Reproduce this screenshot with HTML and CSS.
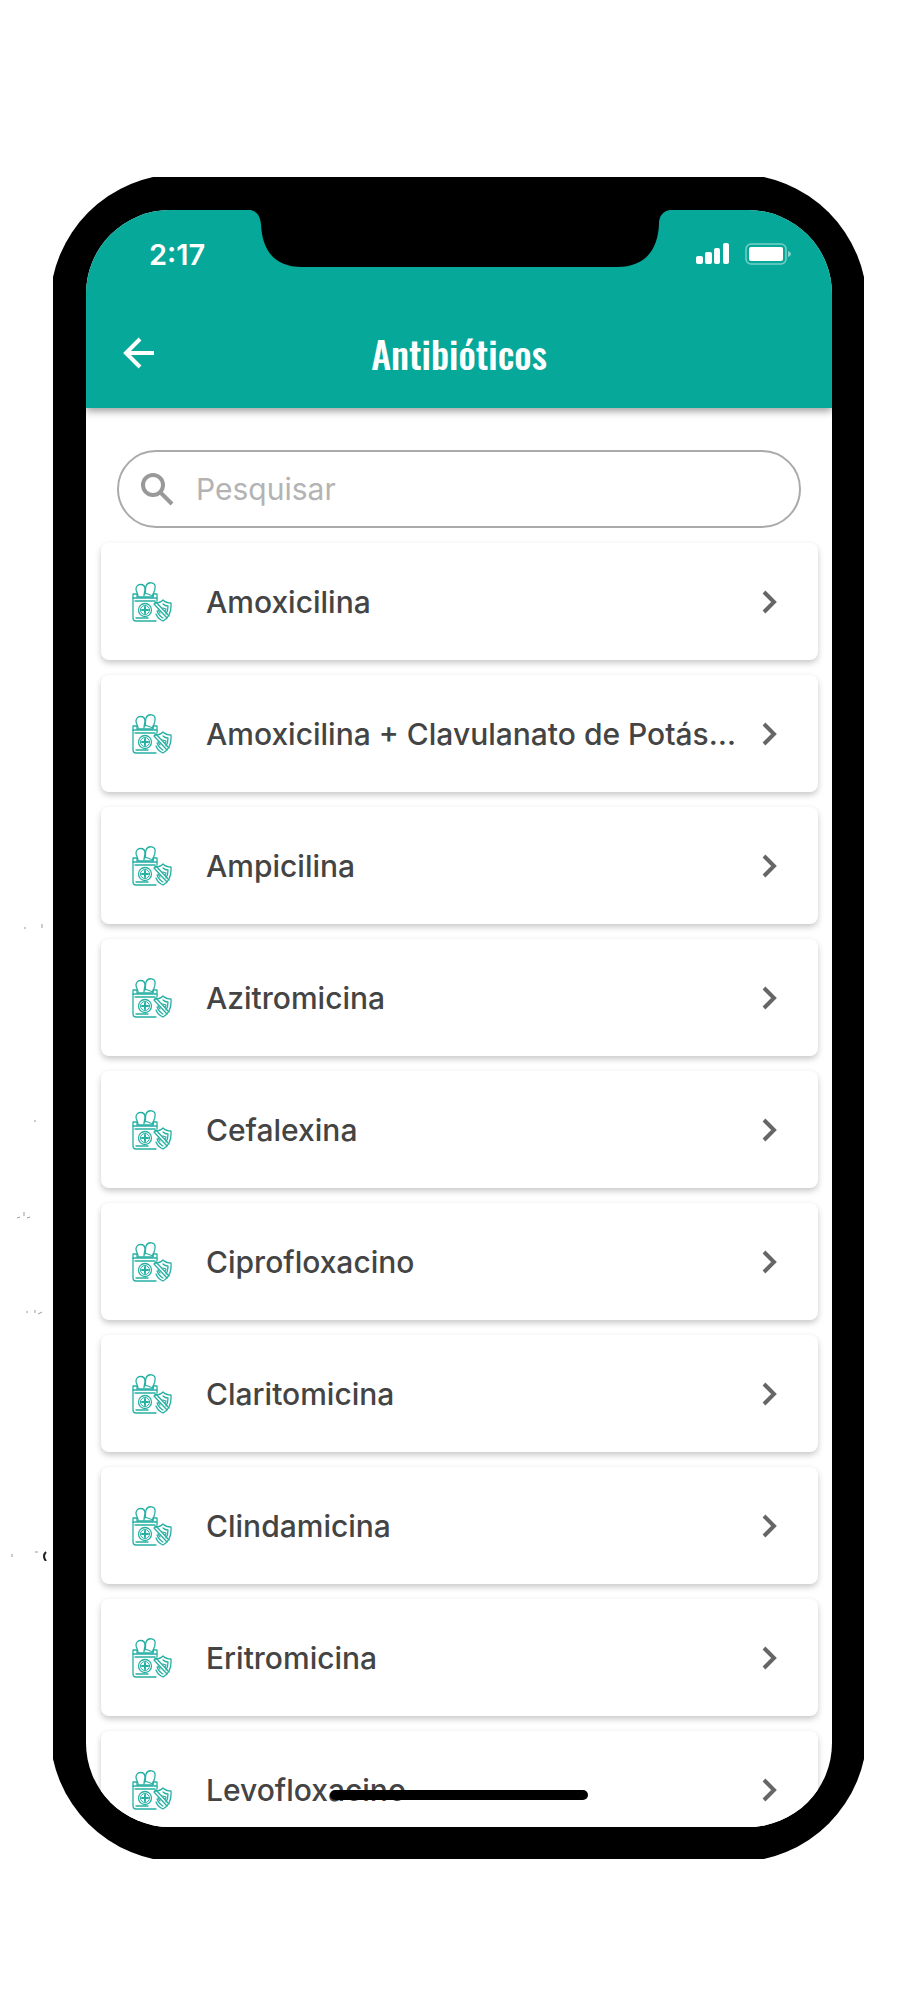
FILE: index.html
```
<!DOCTYPE html>
<html lang="pt-BR">
<head>
  <meta charset="utf-8">
  <meta name="viewport" content="width=device-width, initial-scale=1">
  <title>Antibióticos</title>
  <link rel="stylesheet" href="styles.css">
</head>
<body>
  <svg class="icon-defs" aria-hidden="true">
    <symbol id="icon-medicine" viewBox="0 0 40 40">
      <g fill="none" stroke="currentColor" stroke-width="1.3" stroke-linejoin="round" stroke-linecap="round">
        <!-- pills -->
        <path d="M6 14 C6 11 4 10 4 7 C4 1 13 1 13 7 C13 10 12 11 12 14"/>
        <path d="M13 12 C14 9 13 7 14 4 C16 -1 24 0 23 6 C23 9 21 11 21 14"/>
        <path d="M13 11 L21 14"/>
        <!-- bag -->
        <path d="M1 12 H5 V15 H21 V12 H25 V19 M1 12 V36 Q1 39 4 39 H24"/>
        <path d="M1 16 H25 M3 19 H23 M4 36 H16"/>
        <circle cx="13" cy="28" r="6.500"/>
        <circle cx="13" cy="28" r="4.500" stroke-width="1"/>
        <path d="M13 25 V31 M10 28 H16" stroke-width="2"/>
        <!-- shield -->
        <path d="M31 18 Q34 21 39 21 Q40 34 31 39 Q26 37 24 32 M23 21 Q28 21 31 18"/>
        <path d="M31 22 Q33 24 36 24 Q36 29 34 32 M25 29 Q27 34 31 36"/>
        <path d="M22 22 L35 36 M24 20 L37 34 M22 22 L24 20"/>
        <path d="M31 26 L34 27 L33 29 M26 28 L28 31"/>
      </g>
    </symbol>
    <symbol id="icon-chevron" viewBox="0 0 16 24">
      <path d="M2 2 L12 12 L2 22" fill="none" stroke="currentColor" stroke-width="4"/>
    </symbol>
  </svg>

  <svg class="specks" viewBox="0 0 50 650" aria-hidden="true">
    <path d="M25 16v2M42 13v4M35 209v2M24 301v4M17 307l3-1M27 307l3-1M27 400v2M35 399v3M38 403l4-2M12 643v3M35 641h3" stroke="#999" stroke-width="1"/>
    <path d="M46 641q-4 4 0 9" fill="none" stroke="#222" stroke-width="2"/>
  </svg>

  <div class="phone">
    <div class="frame">
      <main class="screen">
        <header class="app-bar">
          <div class="status-bar">
            <span class="time">2:17</span>
            <div class="status-icons">
              <svg width="34" height="22" viewBox="0 0 34 22" fill="#fff" aria-hidden="true">
                <rect x="0" y="13" width="7" height="8" rx="2"/>
                <rect x="9" y="9" width="7" height="12" rx="2"/>
                <rect x="18" y="5" width="6" height="16" rx="2"/>
                <rect x="27" y="0" width="6" height="21" rx="2"/>
              </svg>
              <svg width="47" height="22" viewBox="0 0 47 22" aria-hidden="true">
                <rect x="1" y="1" width="40" height="20" rx="5" fill="none" stroke="#fff" stroke-opacity=".45" stroke-width="1.500"/>
                <rect x="4" y="4" width="34" height="14" rx="2" fill="#fff"/>
                <path d="M43 8 Q46 9 46 11 Q46 13 43 14 Z" fill="#fff" fill-opacity=".5"/>
              </svg>
            </div>
          </div>
          <div class="toolbar">
            <button class="back" type="button" aria-label="Voltar">
              <svg width="32" height="32" viewBox="0 0 32 32" aria-hidden="true">
                <path d="M17 2 L3 16 L17 30 M3 16 H31" fill="none" stroke="#fff" stroke-width="4"/>
              </svg>
            </button>
            <h1>Antibióticos</h1>
          </div>
        </header>

        <div class="search">
          <label for="search" aria-label="Pesquisar">
            <svg width="34" height="34" viewBox="0 0 34 34" fill="none" stroke="currentColor" stroke-width="4" aria-hidden="true">
              <circle cx="13" cy="13" r="10"/>
              <path d="M20 20 L32 32"/>
            </svg>
          </label>
          <input type="text" id="search" placeholder="Pesquisar">
        </div>

        <nav class="list">
          <a class="card" href="#"><svg class="medicine"><use href="#icon-medicine"/></svg><span>Amoxicilina</span><svg class="chevron"><use href="#icon-chevron"/></svg></a>
          <a class="card" href="#"><svg class="medicine"><use href="#icon-medicine"/></svg><span>Amoxicilina + Clavulanato de Potássio</span><svg class="chevron"><use href="#icon-chevron"/></svg></a>
          <a class="card" href="#"><svg class="medicine"><use href="#icon-medicine"/></svg><span>Ampicilina</span><svg class="chevron"><use href="#icon-chevron"/></svg></a>
          <a class="card" href="#"><svg class="medicine"><use href="#icon-medicine"/></svg><span>Azitromicina</span><svg class="chevron"><use href="#icon-chevron"/></svg></a>
          <a class="card" href="#"><svg class="medicine"><use href="#icon-medicine"/></svg><span>Cefalexina</span><svg class="chevron"><use href="#icon-chevron"/></svg></a>
          <a class="card" href="#"><svg class="medicine"><use href="#icon-medicine"/></svg><span>Ciprofloxacino</span><svg class="chevron"><use href="#icon-chevron"/></svg></a>
          <a class="card" href="#"><svg class="medicine"><use href="#icon-medicine"/></svg><span>Claritomicina</span><svg class="chevron"><use href="#icon-chevron"/></svg></a>
          <a class="card" href="#"><svg class="medicine"><use href="#icon-medicine"/></svg><span>Clindamicina</span><svg class="chevron"><use href="#icon-chevron"/></svg></a>
          <a class="card" href="#"><svg class="medicine"><use href="#icon-medicine"/></svg><span>Eritromicina</span><svg class="chevron"><use href="#icon-chevron"/></svg></a>
          <a class="card" href="#"><svg class="medicine"><use href="#icon-medicine"/></svg><span>Levofloxacino</span><svg class="chevron"><use href="#icon-chevron"/></svg></a>
        </nav>

        <svg class="notch" viewBox="0 0 420 58" aria-hidden="true">
          <path d="M0 0 C7 1 10 6 11 14 C12 40 24 57 52 57 H367 C395 57 408 40 409 14 C409 6 413 1 420 0 Z" fill="#000"/>
        </svg>
        <div class="home-indicator"></div>
      </main>
    </div>
  </div>
</body>
</html>
```

FILE: styles.css
```
* {
  box-sizing: border-box;
}

body {
  margin: 0;
  padding: 177px 60px 0 53px;
  background: #fff;
  font-family: Inter, "Liberation Sans", sans-serif;
  color: #444;
}

.icon-defs {
  position: absolute;
  width: 0;
  height: 0;
}

.specks {
  position: absolute;
  left: 0;
  top: 911px;
  width: 50px;
  height: 650px;
}

/* the outer shell trims the frame corners */
.phone {
  display: flow-root;
  height: calc(100vh - 318px);
  overflow: hidden;
}

.frame {
  height: calc(100% + 6px);
  margin: -3px;
  padding: 36px 35px 35px 36px;
  background: #000;
  border-radius: 131px;
}

.screen {
  position: relative;
  display: flex;
  flex-direction: column;
  height: 100%;
  overflow: hidden;
  background: #fff;
  border-radius: 84px;
}

.app-bar {
  flex: none;
  background: #06a899;
  box-shadow: 0 3px 8px rgba(0, 0, 0, 0.4);
}

.status-bar {
  display: flex;
  justify-content: space-between;
  align-items: center;
  height: 88px;
  padding: 0 40px 0 63px;
}

.time {
  color: #fff;
  font-size: 29px;
  font-weight: 600;
}

.status-icons {
  display: flex;
  gap: 15px;
}

.toolbar {
  display: grid;
  grid-template-columns: 32px 1fr 32px;
  align-items: center;
  height: 110px;
  padding: 0 37px;
}

.back {
  display: flex;
  padding: 0;
  border: 0;
  background: none;
  cursor: pointer;
}

h1 {
  margin: 0;
  color: #fff;
  font-family: Oswald, "Liberation Sans", sans-serif;
  font-size: 38px;
  font-weight: 500;
  line-height: 48px;
  text-align: center;
}

.search {
  flex: none;
  display: flex;
  align-items: center;
  gap: 22px;
  height: 78px;
  margin: 42px 31px 15px;
  padding: 0 21px;
  border: 2px solid #aaa;
  border-radius: 39px;
}

.search label {
  display: flex;
  color: #999;
}

.search input {
  flex: 1;
  min-width: 0;
  padding: 0;
  border: 0;
  outline: 0;
  background: none;
  color: #444;
  font-family: inherit;
  font-size: 30px;
}

.search input::placeholder {
  color: #b3b3b3;
}

.list {
  display: flex;
  flex-direction: column;
  gap: 15px;
  padding: 0 14px 0 15px;
}

.card {
  flex: none;
  display: flex;
  align-items: center;
  height: 117px;
  padding: 0 40px 0 31px;
  background: #fff;
  border-radius: 8px;
  box-shadow: 0 3px 6px rgba(0, 0, 0, 0.22);
  color: #444;
  font-size: 30px;
  font-weight: 500;
  text-decoration: none;
}

.card span {
  flex: 1;
  margin: 0 12px 0 34px;
  overflow: hidden;
  line-height: 40px;
  text-overflow: ellipsis;
  white-space: nowrap;
}

.medicine {
  flex: none;
  width: 40px;
  height: 40px;
  color: #26b0a3;
}

.chevron {
  flex: none;
  width: 16px;
  height: 24px;
  color: #666;
}

.notch {
  position: absolute;
  top: 0;
  left: 50%;
  width: 420px;
  height: 58px;
  margin-left: -209px;
}

.home-indicator {
  position: absolute;
  bottom: 27px;
  left: 50%;
  width: 258px;
  height: 10px;
  margin-left: -129px;
  background: #000;
  border-radius: 5px;
}
```
